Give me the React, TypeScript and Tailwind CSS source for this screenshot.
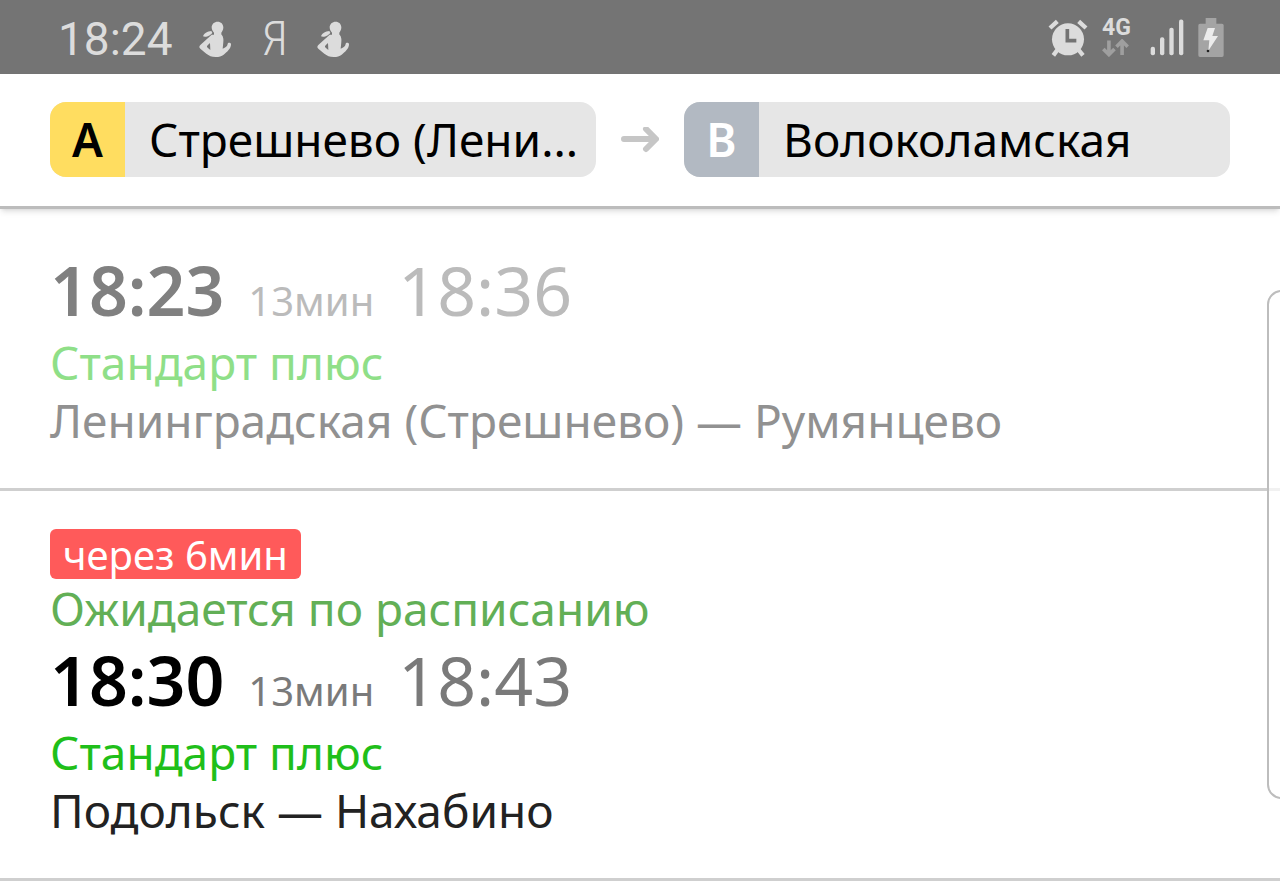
import React from "react";

interface Trip {
  departure: string;
  arrival: string;
  duration: string;
  tariff: string;
  route: string;
  departed?: boolean;
  countdown?: string;
  status?: string;
}

const trips: Trip[] = [
  {
    departure: "18:23",
    arrival: "18:36",
    duration: "13мин",
    tariff: "Стандарт плюс",
    route: "Ленинградская (Стрешнево) — Румянцево",
    departed: true,
  },
  {
    departure: "18:30",
    arrival: "18:43",
    duration: "13мин",
    tariff: "Стандарт плюс",
    route: "Подольск — Нахабино",
    countdown: "через 6мин",
    status: "Ожидается по расписанию",
  },
];

const FigureIcon: React.FC = () => (
  <svg viewBox="474 54 102 114" className="w-[34px] h-[38px] shrink-0" fill="#dcdcdc" aria-hidden="true">
    <path d="M512 76c0-10 8-17 18-17s17 7 17 17c0 7-3 12-6 16v10h-22V92c-4-4-7-10-7-16z" />
    <path d="M486 103c1-7 14-16 25-16l3 5c-4 7-18 15-28 11z" />
    <path
      d="M512 98h30c5 6 6 14 5 22l-2 20c9-3 14-8 15-14 0-5 9-5 10 0 1 13-13 25-22 32-6 5-14 7-24 7-12 0-20-4-28-10l-18-15c-4-3-4-7 0-11zM500 130c-3 3-3 5 0 7l8 7-1-21z"
      fillRule="evenodd"
    />
  </svg>
);

const AlarmIcon: React.FC = () => (
  <svg viewBox="50 52 120 117" className="w-[40px] h-[39px] shrink-0" fill="none" stroke="#dcdcdc" aria-hidden="true">
    <circle cx="110" cy="116" r="48" fill="#dcdcdc" stroke="none" />
    <path d="M56 82l22-20M142 62l22 20" strokeWidth="13" />
    <path d="M78 148l-12 16M142 148l13 16" strokeWidth="13" />
    <path d="M108 85v35h27" stroke="#747474" strokeWidth="11" />
  </svg>
);

const DataArrowsIcon: React.FC = () => (
  <svg viewBox="218 118 82 54" className="w-[27px] h-[18px]" fill="none" stroke="#9f9f9f" strokeWidth="11" aria-hidden="true">
    <path d="M239 122v43M222 148l17 17 17-17" />
    <path d="M279 166v-42M262 141l17-17 17 17" />
  </svg>
);

const SignalIcon: React.FC = () => (
  <svg viewBox="356 58 102 110" className="w-[34px] h-[37px] shrink-0" fill="#dcdcdc" aria-hidden="true">
    <rect x="358" y="141" width="13" height="25" rx="6" />
    <rect x="386" y="112" width="13" height="54" rx="6" />
    <rect x="414" y="84" width="13" height="82" rx="6" />
    <rect x="443" y="59" width="13" height="107" rx="6" />
  </svg>
);

const BatteryIcon: React.FC = () => (
  <svg viewBox="503 54 78 117" className="w-[26px] h-[39px] shrink-0" aria-hidden="true">
    <path d="M526 54h32v17h17q5 0 5 5v90q0 5-5 5h-66q-5 0-5-5V76q0-5 5-5h17z" fill="#a4a4a4" />
    <path d="M532 84h22l-8 24h17l-29 44 3-31h-18z" fill="#ececec" />
    <circle cx="533" cy="153" r="4" fill="#222" />
  </svg>
);

const ArrowIcon: React.FC = () => (
  <svg viewBox="0 0 38 26" className="w-[38px] h-[26px] shrink-0" fill="none" stroke="#c6c6c6" strokeWidth="6" strokeLinecap="round" strokeLinejoin="round" aria-hidden="true">
    <path d="M3 12h31M25 2l10 10-10 10" />
  </svg>
);

const StatusBar: React.FC = () => (
  <div className="h-[74px] pl-[58px] pr-14 flex items-center justify-between bg-[#747474] text-[#dcdcdc]">
    <div className="pt-1 flex items-center gap-[26px]">
      <span className="font-[Roboto,sans-serif] text-[46px] leading-[44px]">18:24</span>
      <FigureIcon />
      <span className="w-[32px] text-center font-['Roboto_Condensed',Roboto,sans-serif] font-light text-[48px] leading-[44px]">
        Я
      </span>
      <FigureIcon />
    </div>
    <div className="flex items-center gap-[14px]">
      <AlarmIcon />
      <div className="w-[34px] flex flex-col">
        <span className="font-[Roboto,sans-serif] font-bold text-[23px] leading-[22px]">4G</span>
        <DataArrowsIcon />
      </div>
      <SignalIcon />
      <BatteryIcon />
    </div>
  </div>
);

const StationButton: React.FC<{ letter: string; name: string; badge: string }> = ({
  letter,
  name,
  badge,
}) => (
  <button
    type="button"
    className="flex-1 min-w-0 h-[75px] flex items-center rounded-2xl overflow-hidden bg-[#e6e6e6] text-left text-[46px] leading-[74px]"
  >
    <span className={`w-[75px] h-full shrink-0 text-center font-semibold ${badge}`}>{letter}</span>
    <span className="h-full pl-6 whitespace-nowrap">{name}</span>
  </button>
);

const TripRow: React.FC<{ trip: Trip }> = ({ trip }) => {
  const { departed } = trip;

  return (
    <li className="px-[50px] pt-[38px] pb-[39px] border-b-[3px] border-[#cfcfcf]">
      {trip.countdown && (
        <div className="w-fit h-[50px] px-[13px] rounded-md bg-[#ff5a5a] text-white text-[40px] leading-[52px]">
          {trip.countdown}
        </div>
      )}
      {trip.status && (
        <p className="text-[46px] leading-[58px] text-[#62af56]">{trip.status}</p>
      )}
      <div className="flex items-baseline gap-6 h-[86px] leading-[86px]">
        <span
          className={`text-[68px] font-semibold ${departed ? "text-[#808080]" : "text-black"}`}
        >
          {trip.departure}
        </span>
        <span className={`text-[40px] ${departed ? "text-[#bbbbbb]" : "text-[#7a7a7a]"}`}>
          {trip.duration}
        </span>
        <span className={`text-[68px] ${departed ? "text-[#bbbbbb]" : "text-[#7a7a7a]"}`}>
          {trip.arrival}
        </span>
      </div>
      <p className={`text-[46px] leading-[58px] ${departed ? "text-[#8fdf88]" : "text-[#1fbf1a]"}`}>
        {trip.tariff}
      </p>
      <p className={`text-[46px] leading-[58px] ${departed ? "text-[#919191]" : "text-[#222222]"}`}>
        {trip.route}
      </p>
    </li>
  );
};

const App: React.FC = () => {
  return (
    <div className="relative min-h-screen overflow-hidden bg-white text-black font-['Noto_Sans',sans-serif]">
      <StatusBar />
      <header className="px-[50px] pt-7 pb-[29px] flex items-center gap-[25px] border-b-[3px] border-[#bcbcbc] shadow-md">
        <StationButton letter="A" name="Стрешнево (Лени..." badge="bg-[#ffdd60] text-black" />
        <ArrowIcon />
        <StationButton letter="B" name="Волоколамская" badge="bg-[#b2b9c2] text-white" />
      </header>
      <ul>
        {trips.map((trip) => (
          <TripRow key={trip.departure} trip={trip} />
        ))}
      </ul>
      {/* edge panel handle, sits half off the screen */}
      <div className="absolute -right-4 top-[290px] w-[29px] h-[509px] rounded-2xl border-2 border-[#bdbdbd] bg-white/70" />
    </div>
  );
};

export default App;
